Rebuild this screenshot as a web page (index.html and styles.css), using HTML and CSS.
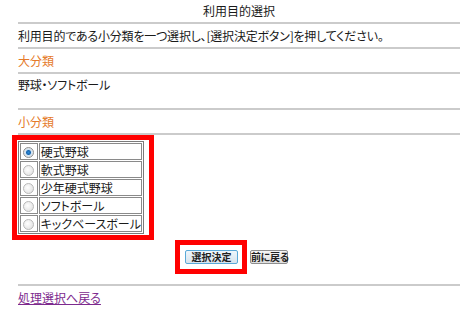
FILE: index.html
```html
<!DOCTYPE html>
<html lang="ja">
<head>
    <meta charset="UTF-8">
    <title>利用目的選択</title>
    <link rel="stylesheet" href="styles.css">
</head>
<body>
<div class="page">
    <h1 class="title">利用目的選択</h1>
    <p class="row">利用目的である小分類を一つ選択し、[選択決定ボタン]を押してください。</p>
    <h2 class="label">大分類</h2>
    <p class="row tall">野球・ソフトボール</p>
    <h2 class="label">小分類</h2>

    <!--小分類の選択肢-->
    <div class="mark mark-list">
        <table class="choices">
            <tr><td class="pick"><span class="radio on"></span></td><td class="name">硬式野球</td></tr>
            <tr><td class="pick"><span class="radio"></span></td><td class="name">軟式野球</td></tr>
            <tr><td class="pick"><span class="radio"></span></td><td class="name">少年硬式野球</td></tr>
            <tr><td class="pick"><span class="radio"></span></td><td class="name">ソフトボール</td></tr>
            <tr><td class="pick"><span class="radio"></span></td><td class="name">キックベースボール</td></tr>
        </table>
    </div>

    <div class="actions">
        <div class="mark mark-btn"><button class="btn btn-main">選択決定</button></div>
        <button class="btn btn-back">前に戻る</button>
    </div>

    <div class="foot"><a class="back" href="#">処理選択へ戻る</a></div>
</div>
</body>
</html>
```

FILE: styles.css
```css
body {
    margin: 0;
    background: #fff;
    color: #1a1a1a;
    font-family: "Noto Sans CJK JP", sans-serif;
    font-size: 12px;
    font-feature-settings: "palt";
}

.page {
    width: 442px;
    margin-left: 18px;
}

/*見出しと各行*/
.title {
    margin: 0;
    height: 22px;
    line-height: 22px;
    font-size: 12px;
    font-weight: normal;
    text-align: center;
    border-bottom: 2px solid #cbcbcb;
}

.row {
    margin: 0;
    height: 23px;
    line-height: 23px;
    letter-spacing: -0.2px;
    border-bottom: 2px solid #cbcbcb;
}

.row.tall {
    height: 34px;
    line-height: 22px;
}

.label {
    margin: 0;
    height: 23px;
    line-height: 23px;
    font-size: 12px;
    font-weight: normal;
    color: #e57a2a;
    border-bottom: 2px solid #cbcbcb;
}

/*赤枠*/
.mark {
    border: 5px solid #ff0000;
}

.mark-list {
    display: inline-block;
    margin-left: -6px;
    padding: 1px 5px 1px 1px;
}

/*選択肢の表*/
.choices {
    width: 126px;
    border: 1px solid #7b7b7b;
    border-spacing: 1px;
    background: #fff;
}

.choices td {
    height: 15px;
    padding: 0;
    border: 1px solid #8a8a8a;
    line-height: 15px;
    white-space: nowrap;
}

.choices .pick {
    width: 18px;
    text-align: center;
}

.choices .name {
    padding-left: 1px;
    font-size: 12px;
}

.radio {
    display: inline-block;
    width: 9px;
    height: 9px;
    margin-top: 3px;
    vertical-align: top;
    border: 1px solid #b9b9b9;
    border-radius: 50%;
    background: radial-gradient(circle at 40% 40%, #fff, #dcdcdc);
}

.radio.on {
    background: radial-gradient(circle, #2b8ad8 0, #1766b0 2px, #cfe2f2 3px, #e8e8e8 5px);
    border-color: #8f8f8f;
}

/*ボタン*/
.actions {
    display: flex;
    align-items: center;
    margin-top: -2px;
    padding-left: 157px;
    height: 32px;
}

.mark-btn {
    padding: 5px 4px 5px 5px;
}

.btn {
    display: block;
    box-sizing: border-box;
    height: 14px;
    padding: 0;
    margin: 0;
    font-family: "Noto Sans CJK JP", sans-serif;
    font-size: 10px;
    font-weight: bold;
    line-height: 12px;
    white-space: nowrap;
    text-align: center;
    color: #222;
    border: 1px solid #8e8e8e;
    border-radius: 2px;
    background: linear-gradient(#f7f7f7, #dedede);
}

.btn-main {
    width: 53px;
    border-color: #5aa9d8;
    background: linear-gradient(#eef6fb, #d7e4ee);
}

.btn-back {
    margin-left: 3px;
    width: 38px;
    letter-spacing: -0.5px;
}

/*フッター*/
.foot {
    margin-top: 11px;
    border-top: 2px solid #cbcbcb;
    padding-top: 3px;
}

.back {
    color: #7d2a8e;
    line-height: 18px;
}
```
